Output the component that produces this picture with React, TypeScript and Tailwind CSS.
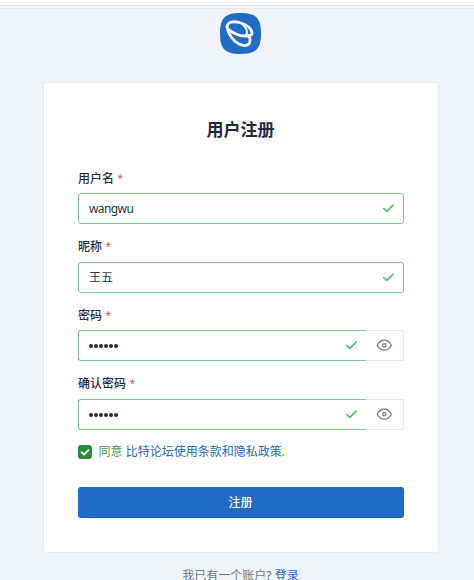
import React from "react";

function Check() {
  return (
    <svg className="mb-px" width="14" height="14" viewBox="0 0 14 14" fill="none" stroke="#48b95b" strokeWidth="1.5" strokeLinecap="round" strokeLinejoin="round">
      <path d="M2.7 7.5 5.8 10.400 12.200 4" />
    </svg>
  );
}

function Eye() {
  return (
    <svg className="mb-px" width="16" height="14" viewBox="0 0 16 14" fill="none" stroke="#6b7483" strokeWidth="1.2" strokeLinecap="round" strokeLinejoin="round">
      <circle cx="8.300" cy="7.200" r="1.600" />
      <path d="M1.200 7.200C3 3.800 5.300 2.200 8.300 2.200S13.600 3.800 15.400 7.200C13.600 10.600 11.300 12.200 8.300 12.200S3 10.600 1.200 7.200Z" />
    </svg>
  );
}

function Field({ label, value, password = false }: { label: string; value: string; password?: boolean }) {
  return (
    <div className="mb-[13.5px]">
      <div className="mb-[6px] flex h-[18px] items-center pl-[0.5px] pt-px text-[12px] font-medium text-[#1f2b3f]">
        <span>{label}</span>
        <span className="mb-px ml-[3.5px] text-[10px] font-normal text-[#d65050]">*</span>
      </div>
      <div className="flex h-[31px]">
        <div
          className={
            "flex flex-1 items-center justify-between border border-[#76cb86] pl-[10.5px] pr-[8px] text-[12px] text-[#26364a] " +
            (password ? "rounded-l-[3px] border-r-0" : "rounded-[3px]")
          }
        >
          {password ? (
            <span className="flex gap-px pt-px">
              {value.split("").map((_, i) => (
                <i key={i} className="size-[4px] rounded-full bg-[#1f2b3f]" />
              ))}
            </span>
          ) : (
            <span className={/^[a-z]+$/.test(value) ? "pt-px tracking-[-0.6px]" : "pt-px"}>{value}</span>
          )}
          <Check />
        </div>
        {password && (
          <div className="flex w-[38px] items-center justify-center border border-l-0 border-[#e8eaed]">
            <Eye />
          </div>
        )}
      </div>
    </div>
  );
}

export default function App() {
  return (
    <div className="h-[580px] w-[474px] overflow-hidden bg-[#f0f4f9] font-['Noto_Sans','Noto_Sans_CJK_SC',sans-serif]">
      <div className="h-[9px] border-b border-[#eae8eb] bg-[#f8f6f8]">
        <div className="h-[6px] border-b border-[#dfdadd] bg-white" />
      </div>
      <div className="flex h-[73px] justify-center pl-[7px] pt-[4px]">
        <svg width="41" height="41" viewBox="0 0 41 41" fill="none">
          <path d="M20.500 0C36 0 41 5 41 20.500S36 41 20.500 41 0 36 0 20.500 5 0 20.500 0Z" fill="#206bc4" />
          <g stroke="#f4f8fd" strokeWidth="2.800" strokeLinecap="round" strokeLinejoin="round">
            <path d="M7 14C7 9 13 7.800 19.500 9.500 27 11.500 32 16 32 20 32 24 22 24 16 21 11 18.500 7 16.500 7 14Z" />
            <path d="M7 14C7.500 20 13 28 19 31 24 33.500 29 33 29.800 29 30.300 26.500 29.800 24 28.500 22.500" />
            <path d="M19.500 9.500C24 12 27 16 27 19.500 27 21 26.500 22 25 22.500" strokeWidth="2" />
          </g>
        </svg>
      </div>
      <main className="ml-[42.5px] h-[471px] w-[396px] rounded-[3px] border border-[#e6eaef] bg-white px-[34px] pt-[34px]">
        <h1 className="mb-[26px] h-[26px] text-center text-[17px] font-bold leading-[26px] text-[#1f2940]">用户注册</h1>
        <Field label="用户名" value="wangwu" />
        <Field label="昵称" value="王五" />
        <Field label="密码" value="••••••" password />
        <Field label="确认密码" value="••••••" password />
        <div className="flex h-[18px] items-center text-[12px]">
          <span className="mr-[7px] flex size-[14px] items-center justify-center rounded-[3px] bg-[#259039]">
            <svg width="14" height="14" viewBox="0 0 14 14" fill="none" stroke="white" strokeWidth="1.900" strokeLinecap="round" strokeLinejoin="round">
              <path d="m3.600 7.300 2.400 2.300 4.500-4.500" />
            </svg>
          </span>
          <span className="text-[#3f9f4a]">
            同意 <a className="text-[#206bc4]">比特论坛使用条款和隐私政策</a>.
          </span>
        </div>
        <button className="mt-[26px] block h-[31px] w-full rounded-[3px] border border-[#206bc4] border-b-[#1d60b0] bg-[#206bc4] pt-px text-center text-[12px] font-medium text-white">注册</button>
      </main>
      <p className="mt-[13.500px] pl-[7px] text-center text-[12px] leading-[18px] text-[#6f7885]">
        我已有一个账户? <a className="text-[#206bc4]">登录</a>
      </p>
    </div>
  );
}
